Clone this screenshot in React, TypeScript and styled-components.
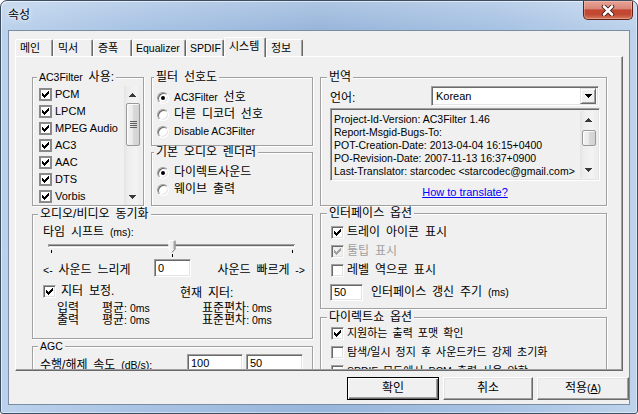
import React from "react";
import styled, { createGlobalStyle } from "styled-components";

const FONT = `"Liberation Sans", "Noto Sans CJK KR", sans-serif`;

const Global = createGlobalStyle`
  html, body { margin: 0; padding: 0; background: #ffffff; }
  body { font-family: ${FONT}; font-size: 12px; color: #000; word-spacing: 2.5px; }
  *, *::before, *::after { box-sizing: border-box; }
`;

const Win = styled.div`
  width: 638px;
  height: 414px;
  border: 1px solid #3e4e62;
  border-radius: 7px 7px 3px 3px;
  background:
    linear-gradient(180deg, rgba(255, 255, 255, 0.22) 0px, rgba(255, 255, 255, 0) 28px),
    linear-gradient(90deg, #bcd2ec 0%, #a8c3e4 22%, #98b6db 50%, #a7c2e3 78%, #bdd3ec 100%);
  box-shadow: inset 1px 1px 0 rgba(255, 255, 255, 0.55), inset -1px -1px 0 rgba(255, 255, 255, 0.45);
  padding: 0 7px 8px;
  display: flex;
  flex-direction: column;
  overflow: hidden;
`;

const TitleBar = styled.div`
  height: 29px;
  margin: 0 -7px;
  padding: 0 4px 0 7px;
  display: flex;
  align-items: flex-start;
  flex: none;
`;

const Title = styled.div`
  line-height: 29px;
  font-size: 12px;
  color: #000;
  text-shadow: 0 0 6px rgba(255, 255, 255, 0.95), 0 0 3px rgba(255, 255, 255, 0.9);
`;

const CloseBtn = styled.div`
  margin-left: auto;
  width: 50px;
  height: 19px;
  border: 1px solid #5e2118;
  border-top: none;
  border-radius: 0 0 5px 5px;
  background: linear-gradient(180deg, #e6a395 0%, #d9877a 42%, #c44630 50%, #c04a33 75%, #d77a5e 100%);
  box-shadow: inset 0 0 0 1px rgba(255, 220, 210, 0.35);
  display: flex;
  align-items: center;
  justify-content: center;
`;

const Client = styled.div`
  flex: 1;
  background: #f0f0f0;
  border: 1px solid #7b8da3;
  display: flex;
  flex-direction: column;
  padding: 6px 6px 0;
  min-height: 0;
`;

const TabStrip = styled.div`
  display: flex;
  align-items: flex-end;
  height: 19px;
  position: relative;
  z-index: 1;
  flex: none;
`;

const Tab = styled.div<{ $w: number; $sel?: boolean; $latin?: boolean }>`
  width: ${(p) => p.$w}px;
  height: ${(p) => (p.$sel ? 20 : 17)}px;
  margin-bottom: ${(p) => (p.$sel ? -1 : 0)}px;
  background: #f0f0f0;
  border-top: 1px solid #fff;
  border-left: 1px solid #fff;
  border-right: 1px solid #696969;
  border-radius: 2px 2px 0 0;
  box-shadow: inset -1px 0 0 #a0a0a0;
  display: flex;
  align-items: center;
  padding: 0 0 ${(p) => (p.$sel ? 2 : 0)}px ${(p) => (p.$latin ? 3 : 4)}px;
  font-size: ${(p) => (p.$latin ? 10.5 : 11)}px;
  line-height: 13px;
  white-space: nowrap;
  overflow: hidden;
`;

const Panel = styled.div`
  height: 315px;
  flex: none;
  border-top: 1px solid #fff;
  border-left: 1px solid #fff;
  border-right: 1px solid #696969;
  border-bottom: 1px solid #696969;
`;

const PanelInner = styled.div`
  height: 100%;
  border-right: 1px solid #a0a0a0;
  border-bottom: 1px solid #a0a0a0;
  overflow: hidden;
  display: grid;
  grid-template-columns: 281px 287px;
  column-gap: 7px;
  align-items: start;
  padding: 14px 0 0 16px;
`;

const Column = styled.div`
  display: flex;
  flex-direction: column;
`;

const TopRow = styled.div`
  display: grid;
  grid-template-columns: 112px 162px;
  column-gap: 7px;
`;

const Stack = styled.div`
  display: flex;
  flex-direction: column;
`;

const Fieldset = styled.fieldset<{ $h: number; $pt: number; $pl: number; $pr: number; $mt: number }>`
  margin: ${(p) => p.$mt}px 0 0;
  min-width: 0;
  height: ${(p) => p.$h}px;
  padding: ${(p) => `${p.$pt}px ${p.$pr}px 0 ${p.$pl}px`};
  border: 1px solid #a0a0a0;
  box-shadow: inset 1px 1px 0 #fff, 1px 1px 0 #fff;
`;

const Legend = styled.legend<{ $ml: number }>`
  margin-left: ${(p) => p.$ml}px;
  padding: 0 2px;
  line-height: 13px;
  font-size: 12px;
  background: #f0f0f0;
  white-space: nowrap;
`;

const L = styled.span`
  font-size: 10.5px;
  word-spacing: 0;
`;

type GroupProps = {
  title: React.ReactNode;
  h: number;
  pt: number;
  pl: number;
  pr?: number;
  lx: number;
  mt?: number;
  children?: React.ReactNode;
};

const Group = ({ title, h, pt, pl, pr = 4, lx, mt = 0, children }: GroupProps) => (
  <Fieldset $h={h} $pt={pt} $pl={pl} $pr={pr} $mt={mt}>
    <Legend $ml={lx - 1 - pl - 2}>{title}</Legend>
    {children}
  </Fieldset>
);

/* ---------- checkbox / radio ---------- */

const Box = styled.span<{ $flat?: boolean; $dis?: boolean }>`
  width: 13px;
  height: 13px;
  flex: none;
  background: ${(p) => (p.$dis ? "#f0f0f0" : "#fff")};
  border: ${(p) => (p.$flat ? "2px solid #8a8a8a" : "1px solid")};
  border-color: ${(p) => (p.$flat ? "#8a8a8a" : "#a0a0a0 #fff #fff #a0a0a0")};
  box-shadow: ${(p) => (p.$flat ? "none" : "inset 1px 1px 0 #696969, inset -1px -1px 0 #e3e3e3")};
  display: flex;
  align-items: center;
  justify-content: center;
`;

const Check = ({ color = "#000" }: { color?: string }) => (
  <svg width="7" height="7" viewBox="0 0 7 7" shapeRendering="crispEdges" fill={color}>
    <rect x="6" y="0" width="1" height="1" />
    <rect x="5" y="1" width="2" height="1" />
    <rect x="0" y="2" width="1" height="1" />
    <rect x="4" y="2" width="3" height="1" />
    <rect x="0" y="3" width="2" height="1" />
    <rect x="3" y="3" width="3" height="1" />
    <rect x="0" y="4" width="5" height="1" />
    <rect x="1" y="5" width="3" height="1" />
    <rect x="2" y="6" width="1" height="1" />
  </svg>
);

const CheckBox = ({ on, flat, dis }: { on?: boolean; flat?: boolean; dis?: boolean }) => (
  <Box $flat={flat} $dis={dis}>{on && <Check color={dis ? "#a0a0a0" : "#000"} />}</Box>
);

const RadioDot = styled.span<{ $on?: boolean }>`
  width: 12px;
  height: 12px;
  flex: none;
  border-radius: 50%;
  background: #fff;
  border: 1px solid;
  border-color: #a0a0a0 #fff #fff #a0a0a0;
  box-shadow: inset 1px 1px 0 #696969, inset -1px -1px 0 #e3e3e3;
  display: flex;
  align-items: center;
  justify-content: center;
  &::after {
    content: "";
    display: ${(p) => (p.$on ? "block" : "none")};
    width: 4px;
    height: 4px;
    border-radius: 50%;
    background: #000;
  }
`;

const Row = styled.div<{ $h: number; $gap?: number; $dis?: boolean; $mt?: number; $small?: boolean }>`
  height: ${(p) => p.$h}px;
  margin-top: ${(p) => p.$mt ?? 0}px;
  display: flex;
  align-items: center;
  gap: ${(p) => p.$gap ?? 4}px;
  color: ${(p) => (p.$dis ? "#a0a0a0" : "#000")};
  font-size: ${(p) => (p.$small ? 11 : 12)}px;
  word-spacing: ${(p) => (p.$small ? 2 : 2.5)}px;
  line-height: 13px;
  white-space: nowrap;
  flex: none;
`;

/* ---------- list with scrollbar ---------- */

const ListBox = styled.div`
  height: 119px;
  display: flex;
`;

const ListItems = styled.div`
  flex: 1;
  padding-left: 5px;
  overflow: hidden;
  font-size: 11px;
  word-spacing: 0;
`;

const ListRow = styled.div`
  height: 17px;
  display: flex;
  align-items: center;
  gap: 3px;
  line-height: 13px;
  white-space: nowrap;
`;

const SBar = styled.div`
  width: 17px;
  height: 100%;
  flex: none;
  display: flex;
  flex-direction: column;
  background: linear-gradient(90deg, #e4e4e4 0%, #eeeeee 25%, #f3f3f3 75%, #ebebeb 100%);
`;

const SArrow = styled.div`
  height: 17px;
  flex: none;
  display: flex;
  align-items: center;
  justify-content: center;
`;

const STrack = styled.div`
  flex: 1;
`;

const SThumb = styled.div<{ $top: number; $len: number }>`
  margin: ${(p) => p.$top}px 1px 0 2px;
  height: ${(p) => p.$len}px;
  border: 1px solid #999999;
  border-radius: 2px;
  background: linear-gradient(90deg, #f3f3f3 0%, #e9e9e9 50%, #dadada 51%, #d2d2d2 100%);
  box-shadow: inset 1px 1px 0 rgba(255, 255, 255, 0.8);
  display: flex;
  align-items: center;
  justify-content: center;
`;

const ArrowGlyph = ({ up }: { up?: boolean }) => (
  <svg width="7" height="4" viewBox="0 0 7 4" shapeRendering="crispEdges" fill="#3a3a3a">
    {up ? (
      <>
        <rect x="3" y="0" width="1" height="1" />
        <rect x="2" y="1" width="3" height="1" />
        <rect x="1" y="2" width="5" height="1" />
        <rect x="0" y="3" width="7" height="1" />
      </>
    ) : (
      <>
        <rect x="0" y="0" width="7" height="1" />
        <rect x="1" y="1" width="5" height="1" />
        <rect x="2" y="2" width="3" height="1" />
        <rect x="3" y="3" width="1" height="1" />
      </>
    )}
  </svg>
);

const Grip = () => (
  <svg width="7" height="7" viewBox="0 0 7 7" shapeRendering="crispEdges">
    {[0, 2, 4, 6].map((y) => (
      <rect key={y} x="0" y={y} width="7" height="1" fill="#5e5e5e" />
    ))}
  </svg>
);

const ScrollBar = ({ top, len, grip }: { top: number; len: number; grip?: boolean }) => (
  <SBar>
    <SArrow>
      <ArrowGlyph up />
    </SArrow>
    <STrack>
      <SThumb $top={top} $len={len}>{grip && <Grip />}</SThumb>
    </STrack>
    <SArrow>
      <ArrowGlyph />
    </SArrow>
  </SBar>
);

/* ---------- edits, combo, memo ---------- */

const sunken = `
  border: 1px solid;
  border-color: #a0a0a0 #fff #fff #a0a0a0;
  box-shadow: inset 1px 1px 0 #696969, inset -1px -1px 0 #e3e3e3;
`;

const Edit = styled.div<{ $w: number; $h: number; $ml?: number }>`
  width: ${(p) => p.$w}px;
  height: ${(p) => p.$h}px;
  margin-left: ${(p) => p.$ml ?? 0}px;
  flex: none;
  background: #fff;
  ${sunken}
  display: flex;
  align-items: center;
  padding: 0 3px;
  font-size: 11px;
  color: #000;
`;

const LangRow = styled.div`
  display: flex;
  align-items: center;
  justify-content: space-between;
  height: 20px;
  margin-right: 1px;
`;

const Combo = styled.div`
  width: 168px;
  height: 20px;
  background: #fff;
  ${sunken}
  display: flex;
  align-items: center;
  padding: 2px 2px 2px 4px;
  font-size: 11px;
`;

const ComboText = styled.span`
  flex: 1;
`;

const ComboBtn = styled.div`
  width: 16px;
  height: 16px;
  flex: none;
  background: #f0f0f0;
  border: 1px solid;
  border-color: #e3e3e3 #696969 #696969 #e3e3e3;
  box-shadow: inset 1px 1px 0 #fff, inset -1px -1px 0 #a0a0a0;
  display: flex;
  align-items: center;
  justify-content: center;
`;

const BlackArrow = () => (
  <svg width="7" height="4" viewBox="0 0 7 4" shapeRendering="crispEdges" fill="#000">
    <rect x="0" y="0" width="7" height="1" />
    <rect x="1" y="1" width="5" height="1" />
    <rect x="2" y="2" width="3" height="1" />
    <rect x="3" y="3" width="1" height="1" />
  </svg>
);

const Memo = styled.div`
  margin-top: 2px;
  height: 73px;
  background: #f0f0f0;
  ${sunken}
  padding: 2px;
  display: flex;
`;

const MemoText = styled.div`
  flex: 1;
  padding: 2px 0 0 1px;
  font-size: 10.5px;
  line-height: 13px;
  word-spacing: 0;
  white-space: nowrap;
  overflow: hidden;
`;

const LinkRow = styled.div`
  margin-top: 5px;
  text-align: center;
  line-height: 13px;
  font-size: 11px;
  word-spacing: 0;
`;

const Link = styled.span`
  color: #0000ff;
  text-decoration: underline;
`;

/* ---------- sync group ---------- */

const TextLine = styled.div<{ $mt?: number }>`
  height: 13px;
  line-height: 13px;
  margin-top: ${(p) => p.$mt ?? 0}px;
  white-space: nowrap;
`;

const SliderBox = styled.div`
  margin-top: 1px;
  height: 18px;
  display: flex;
`;

const ShiftRow = styled.div`
  margin-top: 1px;
  height: 18px;
  display: grid;
  grid-template-columns: 111px 37px 1fr;
  align-items: center;
  margin-right: -1px;
  white-space: nowrap;
`;

const RightText = styled.span`
  text-align: right;
`;

const JitterRow = styled.div`
  margin-top: 6px;
  height: 17px;
  display: grid;
  grid-template-columns: 137px 1fr;
  align-items: center;
  white-space: nowrap;
`;

const Stats = styled.div`
  margin-top: 2px;
  padding-left: 14px;
  display: grid;
  grid-template-columns: 45px 100px 1fr;
  grid-auto-rows: 12px;
  line-height: 12px;
  white-space: nowrap;
`;

const AgcRow = styled.div`
  height: 18px;
  display: flex;
  align-items: center;
  white-space: nowrap;
`;

const AgcLabel = styled.span`
  width: 147px;
  flex: none;
`;

const Slider = () => (
  <svg width="262" height="18" viewBox="0 0 262 18">
    <g shapeRendering="crispEdges">
      <rect x="5" y="4" width="248" height="1" fill="#a0a0a0" />
      <rect x="5" y="5" width="1" height="2" fill="#a0a0a0" />
      <rect x="6" y="5" width="246" height="1" fill="#696969" />
      <rect x="6" y="6" width="246" height="1" fill="#e3e3e3" />
      <rect x="5" y="7" width="248" height="1" fill="#fff" />
      <rect x="252" y="5" width="1" height="2" fill="#fff" />
      <rect x="8" y="10" width="1" height="3" fill="#000" />
      <rect x="250" y="10" width="1" height="3" fill="#000" />
      <rect x="129" y="14" width="1" height="3" fill="#000" />
    </g>
    <polygon points="126,0 133,0 133,9 129.5,12.5 126,9" fill="#f0f0f0" />
    <polyline points="126.5,9.2 126.5,0.5 132.5,0.5" fill="none" stroke="#fff" />
    <line x1="126.7" y1="9.4" x2="129.5" y2="12.2" stroke="#fff" />
    <polyline points="132.5,0.5 132.5,9.2 129.5,12.4" fill="none" stroke="#696969" />
    <line x1="131.5" y1="1" x2="131.5" y2="9" stroke="#a0a0a0" />
  </svg>
);

/* ---------- buttons ---------- */

const ButtonRow = styled.div`
  margin: 6px -6px 0 0;
  display: flex;
  justify-content: flex-end;
  gap: 4px;
  flex: none;
`;

const Btn = styled.div<{ $w: number; $def?: boolean }>`
  width: ${(p) => p.$w}px;
  height: 23px;
  background: #f0f0f0;
  border: 1px solid;
  border-color: ${(p) => (p.$def ? "#000" : "#fff #696969 #696969 #fff")};
  box-shadow: ${(p) =>
    p.$def
      ? "inset 1px 1px 0 #fff, inset -1px -1px 0 #696969, inset -2px -2px 0 #a0a0a0"
      : "inset -1px -1px 0 #a0a0a0, inset 1px 1px 0 #e3e3e3"};
  display: flex;
  align-items: center;
  justify-content: center;
  font-size: 12px;
  line-height: 13px;
`;

const U = styled.span`
  text-decoration: underline;
`;

const CloseGlyph = () => (
  <svg width="14" height="11" viewBox="0 0 14 11">
    <path d="M3 1.5 L11 9.5 M11 1.5 L3 9.5" stroke="#3d1a15" strokeWidth="4.4" strokeLinecap="round" />
    <path d="M3 1.5 L11 9.5 M11 1.5 L3 9.5" stroke="#ffffff" strokeWidth="2.6" strokeLinecap="round" />
  </svg>
);

const tabs = [
  { label: "메인", w: 38 },
  { label: "믹서", w: 40 },
  { label: "증폭", w: 39 },
  { label: "Equalizer", w: 54, latin: true },
  { label: "SPDIF", w: 38, latin: true },
  { label: "시스템", w: 42, sel: true },
  { label: "정보", w: 37 },
];

const formats = ["PCM", "LPCM", "MPEG Audio", "AC3", "AAC", "DTS", "Vorbis"];

const memoLines = [
  "Project-Id-Version: AC3Filter 1.46",
  "Report-Msgid-Bugs-To:",
  "POT-Creation-Date: 2013-04-04 16:15+0400",
  "PO-Revision-Date: 2007-11-13 16:37+0900",
  "Last-Translator: starcodec <starcodec@gmail.com>",
];

export default function App() {
  return (
    <>
      <Global />
      <Win>
        <TitleBar>
          <Title>속성</Title>
          <CloseBtn>
            <CloseGlyph />
          </CloseBtn>
        </TitleBar>
        <Client>
          <TabStrip>
            {tabs.map((t) => (
              <Tab key={t.label} $w={t.w} $sel={t.sel} $latin={t.latin}>
                {t.label}
              </Tab>
            ))}
          </TabStrip>
          <Panel>
            <PanelInner>
              <Column>
                <TopRow>
                  <Group
                    title={
                      <>
                        <L>AC3Filter</L> 사용:
                      </>
                    }
                    h={135}
                    pt={2}
                    pl={1}
                    pr={2}
                    lx={7}
                  >
                    <ListBox>
                      <ListItems>
                        {formats.map((f) => (
                          <ListRow key={f}>
                            <CheckBox on flat />
                            {f}
                          </ListRow>
                        ))}
                      </ListItems>
                      <ScrollBar top={0} len={43} grip />
                    </ListBox>
                  </Group>
                  <Stack>
                    <Group title="필터 선호도" h={75} pt={5} pl={5} lx={5}>
                      <Row $h={17} $gap={5}>
                        <RadioDot $on />
                        <span>
                          <L>AC3Filter</L> 선호
                        </span>
                      </Row>
                      <Row $h={17} $gap={5}>
                        <RadioDot />
                        다른 디코더 선호
                      </Row>
                      <Row $h={17} $gap={5}>
                        <RadioDot />
                        <L>Disable AC3Filter</L>
                      </Row>
                    </Group>
                    <Group title="기본 오디오 렌더러" h={60} pt={5} pl={5} lx={5}>
                      <Row $h={17} $gap={5}>
                        <RadioDot $on />
                        다이렉트사운드
                      </Row>
                      <Row $h={17} $gap={5}>
                        <RadioDot />
                        웨이브 출력
                      </Row>
                    </Group>
                  </Stack>
                </TopRow>
                <Group title="오디오/비디오 동기화" h={131} pt={5} pl={10} pr={8} lx={8} mt={2}>
                  <TextLine>
                    타임 시프트 <L>(ms):</L>
                  </TextLine>
                  <SliderBox>
                    <Slider />
                  </SliderBox>
                  <ShiftRow>
                    <span>
                      <L>&lt;-</L> 사운드 느리게
                    </span>
                    <Edit $w={37} $h={18}>
                      0
                    </Edit>
                    <RightText>
                      사운드 빠르게 <L>-&gt;</L>
                    </RightText>
                  </ShiftRow>
                  <JitterRow>
                    <Row $h={17} $gap={5}>
                      <CheckBox on />
                      지터 보정.
                    </Row>
                    <span>현재 지터:</span>
                  </JitterRow>
                  <Stats>
                    <span>입력</span>
                    <span>
                      평균<L>: 0ms</L>
                    </span>
                    <span>
                      표준편차<L>: 0ms</L>
                    </span>
                    <span>출력</span>
                    <span>
                      평균<L>: 0ms</L>
                    </span>
                    <span>
                      표준편차<L>: 0ms</L>
                    </span>
                  </Stats>
                </Group>
                <Group title={<L>AGC</L>} h={60} pt={1} pl={7} pr={8} lx={8} mt={1}>
                  <AgcRow>
                    <AgcLabel>
                      수행/해제 속도 <L>(dB/s):</L>
                    </AgcLabel>
                    <Edit $w={56} $h={18}>
                      100
                    </Edit>
                    <Edit $w={57} $h={18} $ml={3}>
                      50
                    </Edit>
                  </AgcRow>
                </Group>
              </Column>
              <Column>
                <Group title="번역" h={135} pt={2} pl={9} pr={6} lx={9}>
                  <LangRow>
                    <span>언어:</span>
                    <Combo>
                      <ComboText>Korean</ComboText>
                      <ComboBtn>
                        <BlackArrow />
                      </ComboBtn>
                    </Combo>
                  </LangRow>
                  <Memo>
                    <MemoText>
                      {memoLines.map((l) => (
                        <div key={l}>{l}</div>
                      ))}
                    </MemoText>
                    <ScrollBar top={2} len={16} />
                  </Memo>
                  <LinkRow>
                    <Link>How to translate?</Link>
                  </LinkRow>
                </Group>
                <Group title="인터페이스 옵션" h={102} pt={3} pl={10} lx={9} mt={1}>
                  <Row $h={19} $gap={3}>
                    <CheckBox on />
                    트레이 아이콘 표시
                  </Row>
                  <Row $h={19} $gap={3} $dis>
                    <CheckBox on dis />
                    툴팁 표시
                  </Row>
                  <Row $h={19} $gap={3}>
                    <CheckBox />
                    레벨 역으로 표시
                  </Row>
                  <Row $h={17} $gap={8} $mt={4}>
                    <Edit $w={33} $h={17} $ml={-1}>
                      50
                    </Edit>
                    <span>
                      인터페이스 갱신 주기 <L>(ms)</L>
                    </span>
                  </Row>
                </Group>
                <Group title="다이렉트쇼 옵션" h={70} pt={0} pl={10} lx={9} mt={2}>
                  <Row $h={19} $gap={3} $small>
                    <CheckBox on />
                    지원하는 출력 포맷 확인
                  </Row>
                  <Row $h={19} $gap={3} $small>
                    <CheckBox />
                    탐색/일시 정지 후 사운드카드 강제 초기화
                  </Row>
                  <Row $h={19} $gap={3} $small>
                    <CheckBox />
                    <span>
                      <L>SPDIF</L> 모드에서 <L>PCM</L> 출력 사용 안함
                    </span>
                  </Row>
                </Group>
              </Column>
            </PanelInner>
          </Panel>
          <ButtonRow>
            <Btn $w={92} $def>
              확인
            </Btn>
            <Btn $w={90}>취소</Btn>
            <Btn $w={92}>
              적용<L>(</L>
              <U>
                <L>A</L>
              </U>
              <L>)</L>
            </Btn>
          </ButtonRow>
        </Client>
      </Win>
    </>
  );
}
